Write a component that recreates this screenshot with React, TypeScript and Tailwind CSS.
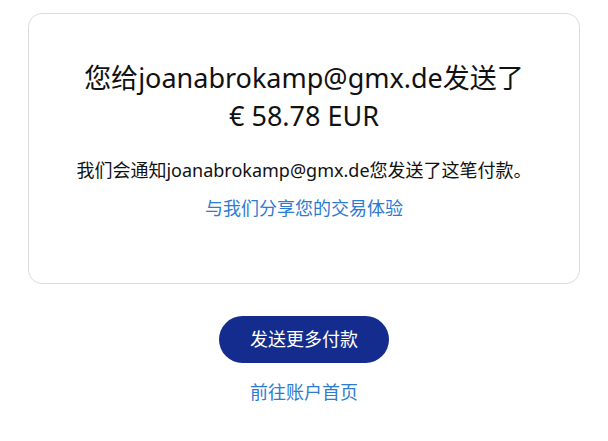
import React from 'react';

const font = { fontFamily: '"Noto Sans", "Noto Sans CJK SC", sans-serif' };

export default function App() {
  const email = 'joanabrokamp@gmx.de';
  const amount = '€ 58.78 EUR';

  return (
    <div className="min-h-screen bg-white px-7 pt-[13px] text-[#111111]" style={font}>
      {/* Confirmation card */}
      <div className="rounded-[14px] border border-[#dcdcdc] px-6 pt-[45px] pb-[62px] text-center">
        <h1 className="text-[27px] leading-[38px] font-normal text-[#111111]">
          您给{email}发送了
          <br />
          {amount}
        </h1>
        <p className="mt-[22px] text-[18px] leading-[26px] text-[#111111]">
          我们会通知{email}您发送了这笔付款。
        </p>
        <a href="#" className="mt-[12px] block text-[18px] leading-[26px] text-[#2b7bd1]">
          与我们分享您的交易体验
        </a>
      </div>

      {/* Actions */}
      <div className="flex flex-col items-center pt-[32px]">
        <button className="h-[47px] rounded-full bg-[#142c8e] px-[31px] text-[18px] text-white">
          发送更多付款
        </button>
        <a href="#" className="mt-[16px] text-[18px] leading-[26px] text-[#2b7bd1]">
          前往账户首页
        </a>
      </div>
    </div>
  );
}
